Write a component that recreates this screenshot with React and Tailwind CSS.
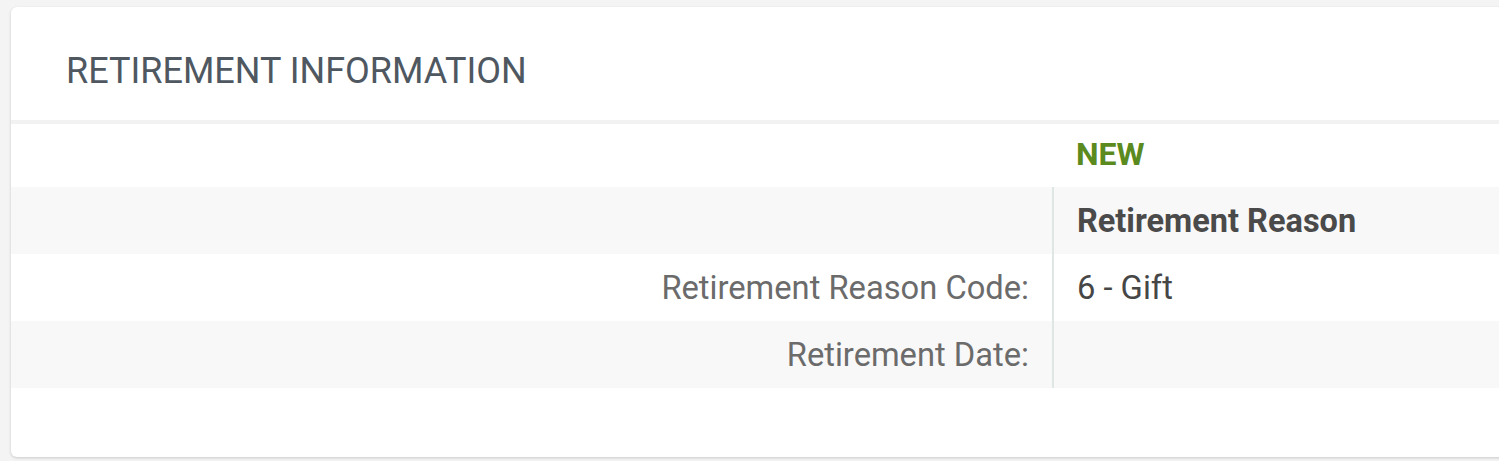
import React from "react";

const rows = [
  { label: "Retirement Reason Code:", value: "6 - Gift", shaded: false },
  { label: "Retirement Date:", value: "", shaded: true },
];

export default function App() {
  return (
    <div className="min-h-[461px] bg-[#f4f4f4] pt-[7px] pl-[11px] overflow-hidden" style={{ fontFamily: "Roboto, 'Liberation Sans', sans-serif" }}>
      <div className="w-[1500px] h-[450px] bg-white rounded-[6px] shadow-[0_1px_3px_rgba(0,0,0,0.18)]">
        {/* Card header */}
        <div className="h-[117px] flex items-center pl-[55px] pt-[14px] border-b-[4px] border-[#f2f2f2]">
          <h2 className="text-[36px] leading-[40px] text-[#4f5861]">RETIREMENT INFORMATION</h2>
        </div>

        <div className="grid grid-cols-[1043px_1fr]">
          <div className="h-[63px]"></div>
          <div className="h-[63px] flex items-center pl-[22px] pb-[4px]">
            <span className="text-[32px] leading-[36px] font-bold text-[#5b8a1f]">NEW</span>
          </div>

          <div className="h-[67px] bg-[#f8f8f8] border-r-2 border-[#dfe7e6]"></div>
          <div className="h-[67px] bg-[#f8f8f8] flex items-center pl-[23px]">
            <span className="text-[32.5px] leading-[36px] font-bold text-[#4a4a4a]">Retirement Reason</span>
          </div>

          {rows.map((row, i) => (
            <React.Fragment key={i}>
              <div className={`h-[67px] flex items-center justify-end pr-[23px] border-r-2 border-[#dfe7e6] ${row.shaded ? "bg-[#f8f8f8]" : "bg-white"}`}>
                <span className="text-[32.7px] leading-[36px] text-[#6b6b6b]">{row.label}</span>
              </div>
              <div className={`h-[67px] flex items-center pl-[23px] ${row.shaded ? "bg-[#f8f8f8]" : "bg-white"}`}>
                <span className="text-[32.7px] leading-[36px] text-[#464646]">{row.value}</span>
              </div>
            </React.Fragment>
          ))}
        </div>
      </div>
    </div>
  );
}
